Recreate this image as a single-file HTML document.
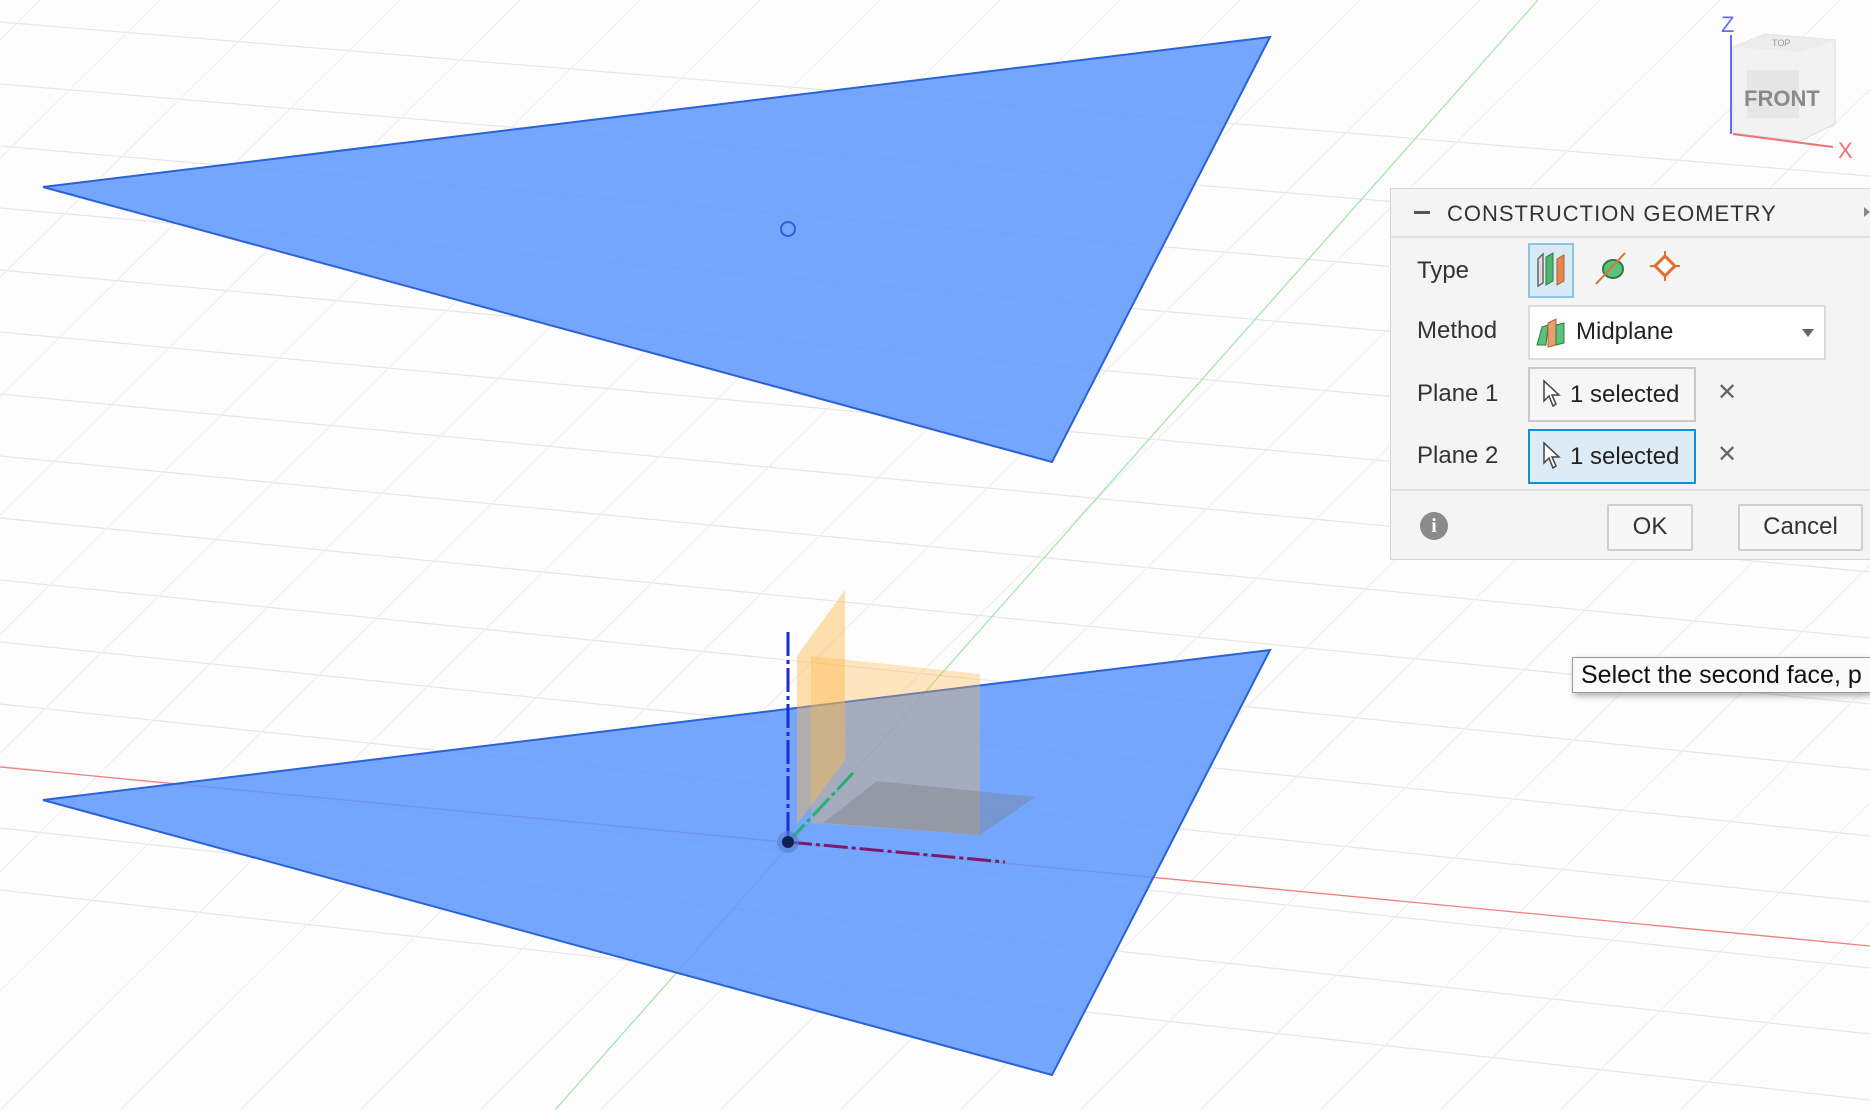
<!DOCTYPE html>
<html><head><meta charset="utf-8"><style>
html,body{margin:0;padding:0;width:1870px;height:1110px;overflow:hidden;background:#fdfdfd;font-family:"Liberation Sans",sans-serif;position:relative}
svg.bg{position:absolute;left:0;top:0;display:block}
.panel{position:absolute;left:1390px;top:188px;width:480px;height:372px;background:#f4f4f4;border:1px solid #d6d6d6;border-right:none;box-sizing:border-box;color:#333;overflow:hidden}
.hdr{height:47px;border-bottom:2px solid #e2e2e2;position:relative;font-size:22px;letter-spacing:1px}
.hdr .minus{position:absolute;left:23px;top:22px;width:16px;height:3px;background:#555}
.hdr span{position:absolute;left:56px;top:12px}
.lbl{position:absolute;left:26px;font-size:24px;color:#333}
.box{position:absolute;box-sizing:border-box;border:2px solid #d0d0d0;background:#fff;font-size:24px}
.sel{background:#f6f6f6;border-color:#c8c8c8}
.btn{position:absolute;box-sizing:border-box;border:2px solid #cfcfcf;background:#f7f7f7;font-size:24px;text-align:center;line-height:42px;color:#333;border-radius:2px}
.x{position:absolute;left:326px;font-size:24px;color:#666}
.tip{position:absolute;left:1572px;top:657px;width:298px;height:36px;box-sizing:border-box;background:#fafafa;border:1px solid #999;border-right:none;box-shadow:2px 3px 6px rgba(0,0,0,.3);font-size:25px;line-height:34px;padding-left:8px;color:#111;white-space:nowrap;overflow:hidden}
</style></head><body>
<svg class="bg" width="1870" height="1110" id="g">
<g id="grid" stroke="#e6e6e6" stroke-width="1.2"></g>
<line x1="0" y1="767" x2="1870" y2="946" stroke="#f08080" stroke-width="1.3"/>
<line x1="1538" y1="0" x2="555" y2="1110" stroke="#a8e6a8" stroke-width="1.3"/>
<polygon points="43,187 1270,37 1052,462" fill="#5b97fb" fill-opacity="0.85" stroke="#2a62d8" stroke-width="2"/>
<circle cx="788" cy="229" r="7" fill="none" stroke="#2a62d8" stroke-width="2"/>
<polygon points="43,800 1270,650 1052,1075" fill="#5b97fb" fill-opacity="0.85" stroke="#2a62d8" stroke-width="2"/>
<polygon points="797,656 845,590 845,760 797,825" fill="#ffb84a" fill-opacity="0.45"/>
<polygon points="811,656 980,674 980,835 811,823" fill="#ffb84a" fill-opacity="0.35"/>
<polygon points="877,781 1035,797 980,835 823,823" fill="#777" fill-opacity="0.35"/>
<line x1="788" y1="632" x2="788" y2="842" stroke="#1a2fd0" stroke-width="3" stroke-dasharray="24,4,4,4"/>
<line x1="788" y1="842" x2="1005" y2="862" stroke="#7a1a6a" stroke-width="3" stroke-dasharray="24,4,4,4"/>
<line x1="788" y1="842" x2="853" y2="773" stroke="#22b07a" stroke-width="3" stroke-dasharray="24,4,4,4"/>
<circle cx="788" cy="842" r="11" fill="#5b7dd0" fill-opacity="0.6"/>
<circle cx="788" cy="842" r="6" fill="#0d2250"/>
<polygon points="1733,47 1765,34 1835,40 1835,124 1800,141 1733,133" fill="#f2f2f2" stroke="#ddd"/>
<polygon points="1765,34 1835,40 1800,52 1733,47" fill="#ececec"/>
<rect x="1747" y="70" width="52" height="48" fill="#e6e6e6"/>
<text x="1744" y="106" font-size="22" font-weight="bold" fill="#8a8a8a" font-family="Liberation Sans">FRONT</text>
<text x="1772" y="46" font-size="9" fill="#999" font-family="Liberation Sans">TOP</text>
<line x1="1731" y1="35" x2="1731" y2="134" stroke="#6a6afa" stroke-width="2"/>
<line x1="1733" y1="134" x2="1833" y2="147" stroke="#f07070" stroke-width="2"/>
<text x="1721" y="32" font-size="22" fill="#6a6afa" font-family="Liberation Sans">Z</text>
<text x="1838" y="158" font-size="22" fill="#f07070" font-family="Liberation Sans">X</text>
</svg>
<script>
var g=document.getElementById('grid'),s='';
for(var i=1;i<17;i++){var y0=-40+i*62,y1=y0+150+i*4;if(y1>1110)break;s+='<line x1="0" y1="'+y0+'" x2="1870" y2="'+y1+'"/>';}
for(var j=-9;j<16;j++){var a=1000+j*120,b=a-1120;var X1=a,Y1=0,X2=b,Y2=1110;var k=1110/1120;
if(X1>1870){Y1=(X1-1870)*k;X1=1870;} if(X2<0){Y2=1110-(-X2)*k;X2=0;}
if(Y1<Y2&&X1>=0&&X2<=1870)s+='<line stroke="#efefef" x1="'+X1+'" y1="'+Y1+'" x2="'+X2+'" y2="'+Y2+'"/>';}
g.innerHTML=s;
</script>
<div class="panel">
 <div class="hdr"><div class="minus"></div><span>CONSTRUCTION GEOMETRY</span><div style="position:absolute;right:0;top:18px;width:0;height:0;border-left:6px solid #888;border-top:5px solid transparent;border-bottom:5px solid transparent"></div></div>
 <div class="lbl" style="top:68px">Type</div>
 <div class="box" style="left:137px;top:54px;width:46px;height:55px;background:#d8eaf5;border-color:#8cc4e8">
  <svg width="42" height="51"><path d="M8 14 L13 9 L13 38 L8 41Z" fill="#ddd" stroke="#666" stroke-width="1.5"/><path d="M16 12 L23 8 L23 36 L16 40Z" fill="#4cb56a" stroke="#2d7a45"/><path d="M27 14 L34 10 L34 36 L27 40Z" fill="#e0894a" stroke="#b06030"/></svg></div>
 <svg style="position:absolute;left:200px;top:58px" width="40" height="45"><ellipse cx="22" cy="22" rx="10" ry="9" fill="#5cc27a" stroke="#2d7a45" stroke-width="2"/><line x1="5" y1="37" x2="34" y2="6" stroke="#e07030" stroke-width="2"/></svg>
 <svg style="position:absolute;left:257px;top:60px" width="34" height="34"><line x1="17" y1="2" x2="17" y2="32" stroke="#e07030" stroke-width="2"/><line x1="2" y1="17" x2="32" y2="17" stroke="#e07030" stroke-width="2"/><rect x="10" y="10" width="14" height="14" transform="rotate(45 17 17)" fill="#fff" stroke="#e07030" stroke-width="3"/></svg>
 <div class="lbl" style="top:128px">Method</div>
 <div class="box" style="left:137px;top:116px;width:298px;height:55px;border-color:#dcdcdc">
  <svg style="position:absolute;left:4px;top:10px" width="36" height="32"><path d="M3 28 L8 10 L14 8 L12 28Z" fill="#5cc27a" stroke="#2d7a45"/><path d="M14 6 L22 2 L22 28 L14 30Z" fill="#e8a070" stroke="#c06030"/><path d="M22 8 L30 6 L30 26 L22 28Z" fill="#5cc27a" stroke="#2d7a45"/></svg>
  <span style="position:absolute;left:46px;top:11px;color:#222">Midplane</span>
  <div style="position:absolute;right:10px;top:22px;border-top:8px solid #666;border-left:6px solid transparent;border-right:6px solid transparent"></div></div>
 <div class="lbl" style="top:191px">Plane 1</div>
 <div class="box sel" style="left:137px;top:178px;width:168px;height:55px">
  <svg style="position:absolute;left:12px;top:10px" width="20" height="30"><path d="M2 2 L2 22 L7 17 L11 27 L14 25 L10 16 L17 16Z" fill="#fff" stroke="#444" stroke-width="1.5"/></svg>
  <span style="position:absolute;left:40px;top:12px;color:#222">1 selected</span></div>
 <div class="x" style="top:189px">✕</div>
 <div class="lbl" style="top:253px">Plane 2</div>
 <div class="box" style="left:137px;top:240px;width:168px;height:55px;background:#dcebf5;border-color:#1090d8">
  <svg style="position:absolute;left:12px;top:10px" width="20" height="30"><path d="M2 2 L2 22 L7 17 L11 27 L14 25 L10 16 L17 16Z" fill="#fff" stroke="#444" stroke-width="1.5"/></svg>
  <span style="position:absolute;left:40px;top:12px;color:#222">1 selected</span></div>
 <div class="x" style="top:251px">✕</div>
 <div style="position:absolute;left:0;top:300px;width:480px;border-top:2px solid #e2e2e2"></div>
 <div style="position:absolute;left:29px;top:323px;width:28px;height:28px;border-radius:50%;background:#8a8a8a;color:#fff;text-align:center;font-weight:bold;font-size:20px;line-height:28px;font-family:'Liberation Serif',serif">i</div>
 <div class="btn" style="left:216px;top:315px;width:86px;height:47px">OK</div>
 <div class="btn" style="left:347px;top:315px;width:125px;height:47px">Cancel</div>
</div>
<div class="tip">Select the second face, p</div>
</body></html>
